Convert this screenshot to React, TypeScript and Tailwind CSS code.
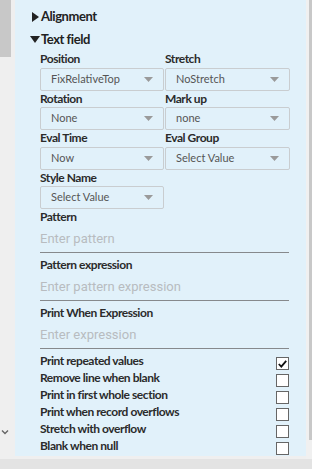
import React from 'react'

const selects: [string, string, string, string][] = [
  ['Position', 'FixRelativeTop', 'Stretch', 'NoStretch'],
  ['Rotation', 'None', 'Mark up', 'none'],
  ['Eval Time', 'Now', 'Eval Group', 'Select Value'],
]

const inputs = [
  ['Pattern', 'Enter pattern'],
  ['Pattern expression', 'Enter pattern expression'],
  ['Print When Expression', 'Enter expression'],
]

const checks = [
  ['Print repeated values', true],
  ['Remove line when blank', false],
  ['Print in first whole section', false],
  ['Print when record overflows', false],
  ['Stretch with overflow', false],
  ['Blank when null', false],
] as const

function Caret() {
  return (
    <svg width="9" height="5" viewBox="0 0 9 5" className="shrink-0">
      <path d="M0 0 H9 L4.5 5 Z" fill="#9a9a9a" />
    </svg>
  )
}

function Select({ value }: { value: string }) {
  return (
    <div className="flex h-[23px] items-center justify-between rounded-[2px] border border-[#c9cdd0] pl-[10px] pr-[10px] text-[11px] text-[#555]">
      <span>{value}</span>
      <Caret />
    </div>
  )
}

function Label({ children }: { children: React.ReactNode }) {
  return (
    <div className="flex h-[16.5px] items-center text-[12px] font-bold tracking-[-0.45px] text-[#2b2b2b]">
      {children}
    </div>
  )
}

export default function App() {
  return (
    <div
      className="flex h-[469px] w-[312px] flex-col bg-[#e3e3e3]"
      style={{ fontFamily: 'Lato, "Open Sans", sans-serif' }}
    >
      <div className="flex h-[459px]">
        {/* left strip */}
        <div className="flex w-[15px] flex-col bg-[#efefef]">
          <div className="h-[57px] w-[11px] bg-[#c8c8c8]" />
          <div className="mt-[372px] pl-[1px]">
            <svg width="8" height="6" viewBox="0 0 8 6">
              <path d="M1 1.5 L4 4.5 L7 1.5" fill="none" stroke="#666" strokeWidth="1.4" />
            </svg>
          </div>
        </div>

        {/* panel */}
        <div className="flex w-[291px] flex-col bg-[#efefef]">
          <div className="h-[456px] bg-[#e1f1fa] pl-[17px] pr-[17px] pt-[5px]">
            <div className="flex h-[23px] items-center gap-[2px] text-[13px] font-bold tracking-[-0.45px] text-[#222]">
              <svg width="7" height="10" viewBox="0 0 7 10">
                <path d="M0 0 L7 5 L0 10 Z" fill="#222" />
              </svg>
              Alignment
            </div>
            <div className="-ml-[2px] flex h-[23px] items-center gap-[1px] text-[13px] font-bold tracking-[-0.45px] text-[#222]">
              <svg width="10" height="7" viewBox="0 0 10 7">
                <path d="M0 0 H10 L5 7 Z" fill="#222" />
              </svg>
              Text field
            </div>

            <div className="pl-[8px]">
              {selects.map(([l1, v1, l2, v2]) => (
                <div key={l1} className="grid grid-cols-[124px_125px] gap-x-[1px]">
                  <Label>{l1}</Label>
                  <Label>{l2}</Label>
                  <Select value={v1} />
                  <Select value={v2} />
                </div>
              ))}
              <div className="w-[124px]">
                <Label>Style Name</Label>
                <Select value="Select Value" />
              </div>

              {inputs.map(([label, ph], i) => (
                <div key={label} className={i > 0 ? 'mt-[4px]' : ''}>
                  <div className="flex h-[16px] items-center text-[12px] font-bold tracking-[-0.45px] text-[#2b2b2b]">
                    {label}
                  </div>
                  <div
                    className="flex h-[28px] items-center border-b border-[#86898c] pt-[1px] text-[13px] text-[#b8bcc0]"
                    style={{ fontFamily: 'Roboto, sans-serif' }}
                  >
                    {ph}
                  </div>
                </div>
              ))}

              <div className="mt-[3px]">
                {checks.map(([label, on]) => (
                  <div key={label} className="flex h-[17px] items-start justify-between">
                    <span className="text-[12px] font-bold tracking-[-0.45px] text-[#2b2b2b]">
                      {label}
                    </span>
                    <span className="mt-[5px] flex h-[13px] w-[13px] items-center justify-center border border-[#666] bg-white">
                      {on && (
                        <svg width="9" height="8" viewBox="0 0 9 8">
                          <path d="M0.8 4 L3.3 6.6 L8.2 0.8" fill="none" stroke="#111" strokeWidth="1.8" />
                        </svg>
                      )}
                    </span>
                  </div>
                ))}
              </div>
            </div>
          </div>
        </div>

        {/* right strip */}
        <div className="flex w-[6px] bg-[#f0f0f0]">
          <div className="ml-[3px] h-[440px] w-[3px] bg-[#c8c8c8]" />
        </div>
      </div>
    </div>
  )
}
